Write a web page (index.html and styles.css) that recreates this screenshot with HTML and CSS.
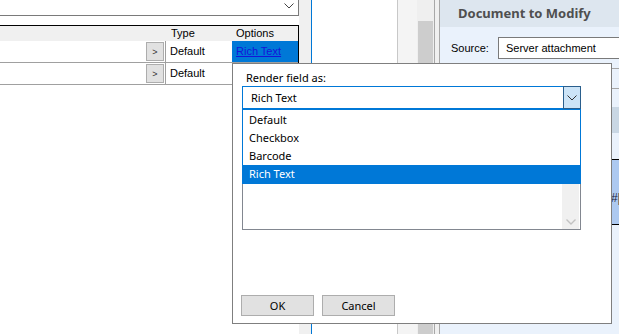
FILE: index.html
```html
<!DOCTYPE html>
<html lang="en">

<head>
  <meta charset="UTF-8">
  <title>Render field as</title>
  <link rel="stylesheet" href="styles.css">
</head>

<body>
  <div class="app">
    <!-- field list -->
    <div class="left">
      <div class="top-combo">
        <svg class="chev" width="10" height="6" viewBox="0 0 10 6"><path d="M0.5 0.5 L5 5 L9.5 0.5" fill="none" stroke="#444" stroke-width="1"/></svg>
      </div>
      <div class="grid">
        <div class="grid-head">
          <span class="cell-name"></span>
          <span class="cell-type">Type</span>
          <span class="cell-opt">Options</span>
        </div>
        <div class="grid-row">
          <span class="cell-name"><button class="more">&gt;</button></span>
          <span class="cell-type">Default</span>
          <span class="cell-opt selected"><a href="#">Rich Text</a></span>
        </div>
        <div class="grid-row">
          <span class="cell-name"><button class="more">&gt;</button></span>
          <span class="cell-type">Default</span>
          <span class="cell-opt"></span>
        </div>
      </div>
    </div>
    <div class="gutter"></div>
    <div class="mid"></div>
    <div class="mid2"></div>
    <div class="vscroll"><div class="thumb"></div></div>
    <div class="sep"></div>

    <!-- document panel -->
    <div class="right">
      <div class="panel-head">Document to Modify</div>
      <div class="source-row">
        <span class="source-label">Source:</span>
        <span class="source-input">Server attachment</span>
      </div>
      <div class="field-box"></div>
      <div class="band"></div>
      <div class="blue-area">#[Rich Text]</div>
    </div>

    <!-- render popup -->
    <div class="popup">
      <div class="popup-label">Render field as:</div>
      <div class="combo">
        <span class="combo-text">Rich Text</span>
        <span class="combo-btn">
          <svg width="10" height="6" viewBox="0 0 10 6"><path d="M0.5 0.5 L5 5 L9.5 0.5" fill="none" stroke="#333" stroke-width="1"/></svg>
        </span>
      </div>
      <div class="list">
        <div class="list-scroll">
          <svg width="10" height="6" viewBox="0 0 10 6"><path d="M0.5 0.5 L5 5 L9.5 0.5" fill="none" stroke="#c2c2c2" stroke-width="1.4"/></svg>
        </div>
        <div class="dropdown">
          <div class="item">Default</div>
          <div class="item">Checkbox</div>
          <div class="item">Barcode</div>
          <div class="item sel">Rich Text</div>
        </div>
      </div>
      <div class="popup-actions">
        <button class="btn">OK</button>
        <button class="btn">Cancel</button>
      </div>
    </div>
  </div>
</body>

</html>
```

FILE: styles.css
```css
body {
  margin: 0;
  font-family: "Liberation Sans", Arial, sans-serif;
  font-size: 11px;
  color: #000;
  background-color: #fff;
}

.app {
  position: relative;
  display: flex;
  width: 619px;
  height: 334px;
  overflow: hidden;
}

/* left side: fields grid */
.left {
  flex: none;
  width: 299px;
  background-color: #fff;
}

.top-combo {
  box-sizing: border-box;
  height: 16px;
  border-right: 1px solid #7a7a7a;
  border-bottom: 1px solid #7a7a7a;
  display: flex;
  justify-content: flex-end;
  align-items: flex-start;
  padding: 3px 4px 0 0;
}

.grid {
  margin-top: 9px;
  border-top: 1px solid #000;
  border-right: 1px solid #000;
}

.grid-head {
  display: flex;
  height: 15px;
  line-height: 15px;
  background-color: #f0f0f0;
}

.grid-head .cell-type {
  padding-left: 6px;
}

.cell-name {
  width: 165px;
  flex: none;
}

.cell-type {
  box-sizing: border-box;
  width: 67px;
  flex: none;
  padding-left: 5px;
}

.cell-opt {
  flex: 1;
  padding-left: 4px;
}

.grid-row {
  box-sizing: border-box;
  display: flex;
  height: 22px;
  line-height: 21px;
  border-bottom: 1px solid #a0a0a0;
}

.grid-row .cell-name {
  display: flex;
  justify-content: flex-end;
  align-items: center;
  padding-right: 1px;
  box-sizing: border-box;
}

.grid-row .cell-type {
  border-left: 1px solid #a0a0a0;
  padding-left: 4px;
}

.more {
  box-sizing: border-box;
  width: 18px;
  height: 19px;
  padding: 0;
  border: 1px solid #adadad;
  background-color: #e1e1e1;
  color: #333;
  font-family: "Liberation Sans", Arial, sans-serif;
  font-size: 9px;
}

.cell-opt.selected {
  background-color: #0078d7;
}

.cell-opt a {
  color: #1414d8;
  text-decoration: underline;
}

/* splitter area */
.gutter {
  flex: none;
  width: 12px;
  background-color: #f0f0f0;
}

.mid {
  flex: none;
  width: 85px;
  border-left: 1px solid #0078d7;
  border-right: 1px solid #c8c8c8;
  background-color: #fff;
}

.mid2 {
  flex: none;
  width: 19px;
  background-color: #f4f4f4;
}

.vscroll {
  flex: none;
  box-sizing: border-box;
  width: 17px;
  padding: 21px 1px 0;
  background-color: #efefef;
}

.thumb {
  height: 100%;
  background-color: #cdcdcd;
}

.sep {
  flex: none;
  width: 4px;
  border-left: 1px solid #a8a8a8;
  border-right: 1px solid #a8a8a8;
  background-color: #f0f0f0;
}

/* right side: document panel */
.right {
  flex: 1;
  background-color: #eaf2fc;
}

.panel-head {
  height: 27px;
  line-height: 27px;
  padding-left: 18px;
  background-color: #dde6ef;
  color: #4f4f4f;
  font-family: "Noto Sans", sans-serif;
  font-weight: bold;
  font-size: 13px;
  white-space: nowrap;
}

.source-row {
  display: flex;
  align-items: center;
  margin-top: 10px;
  padding-left: 11px;
}

.source-label {
  width: 47px;
  flex: none;
}

.source-input {
  box-sizing: border-box;
  flex: 1;
  height: 22px;
  line-height: 20px;
  padding-left: 7px;
  border: 1px solid #7a7a7a;
  background-color: #fff;
  white-space: nowrap;
}

.field-box {
  box-sizing: border-box;
  height: 21px;
  margin: 9px 0 0 58px;
  border-top: 1px solid #a5a5a5;
  border-bottom: 1px solid #a5a5a5;
}

.band {
  height: 26px;
  margin-top: 18px;
  background-color: #c9d7e4;
}

.blue-area {
  box-sizing: border-box;
  height: 66px;
  margin-top: 26px;
  padding: 31px 0 0 171px;
  line-height: 14px;
  border-top: 1px solid #000;
  border-bottom: 1px solid #000;
  background-color: #adc9f0;
  color: #1b1b3a;
  font-size: 12px;
  white-space: nowrap;
}

/* popup */
.popup {
  position: absolute;
  left: 232px;
  top: 63px;
  box-sizing: border-box;
  width: 380px;
  height: 261px;
  padding: 6px 9px 7px;
  border: 1px solid #7f7f7f;
  background-color: #fff;
  display: flex;
  flex-direction: column;
  font-family: "Noto Sans", sans-serif;
  font-size: 11px;
  color: #000;
}

.popup-label {
  line-height: 16px;
  padding-left: 4px;
}

.combo {
  box-sizing: border-box;
  display: flex;
  width: 339px;
  height: 23px;
  border: 1px solid #0078d7;
}

.combo-text {
  flex: 1;
  padding-left: 8px;
  line-height: 21px;
}

.combo-btn {
  width: 16px;
  margin: -1px -1px -1px 0;
  border: 1px solid #2a5e8c;
  background-color: #cce4f7;
  display: flex;
  align-items: center;
  justify-content: center;
}

.list {
  position: relative;
  box-sizing: border-box;
  width: 339px;
  height: 121px;
  border: 1px solid #828790;
  display: flex;
  justify-content: flex-end;
}

.list-scroll {
  width: 17px;
  margin-right: 1px;
  background-color: #f0f0f0;
  display: flex;
  align-items: flex-end;
  justify-content: center;
  padding-bottom: 4px;
  box-sizing: border-box;
}

.dropdown {
  position: absolute;
  left: -1px;
  right: -1px;
  top: -1px;
  padding-top: 1px;
  border: 1px solid #0078d7;
  background-color: #fff;
}

.item {
  height: 18px;
  line-height: 18px;
  padding-left: 6px;
}

.item.sel {
  background-color: #0078d7;
  color: #fff;
}

.popup-actions {
  display: flex;
  gap: 8px;
  margin-top: auto;
  margin-left: -1px;
}

.btn {
  box-sizing: border-box;
  width: 73px;
  height: 21px;
  padding: 0;
  border: 1px solid #adadad;
  background-color: #e1e1e1;
  color: #000;
  font-family: "Noto Sans", sans-serif;
  font-size: 11px;
}
```
